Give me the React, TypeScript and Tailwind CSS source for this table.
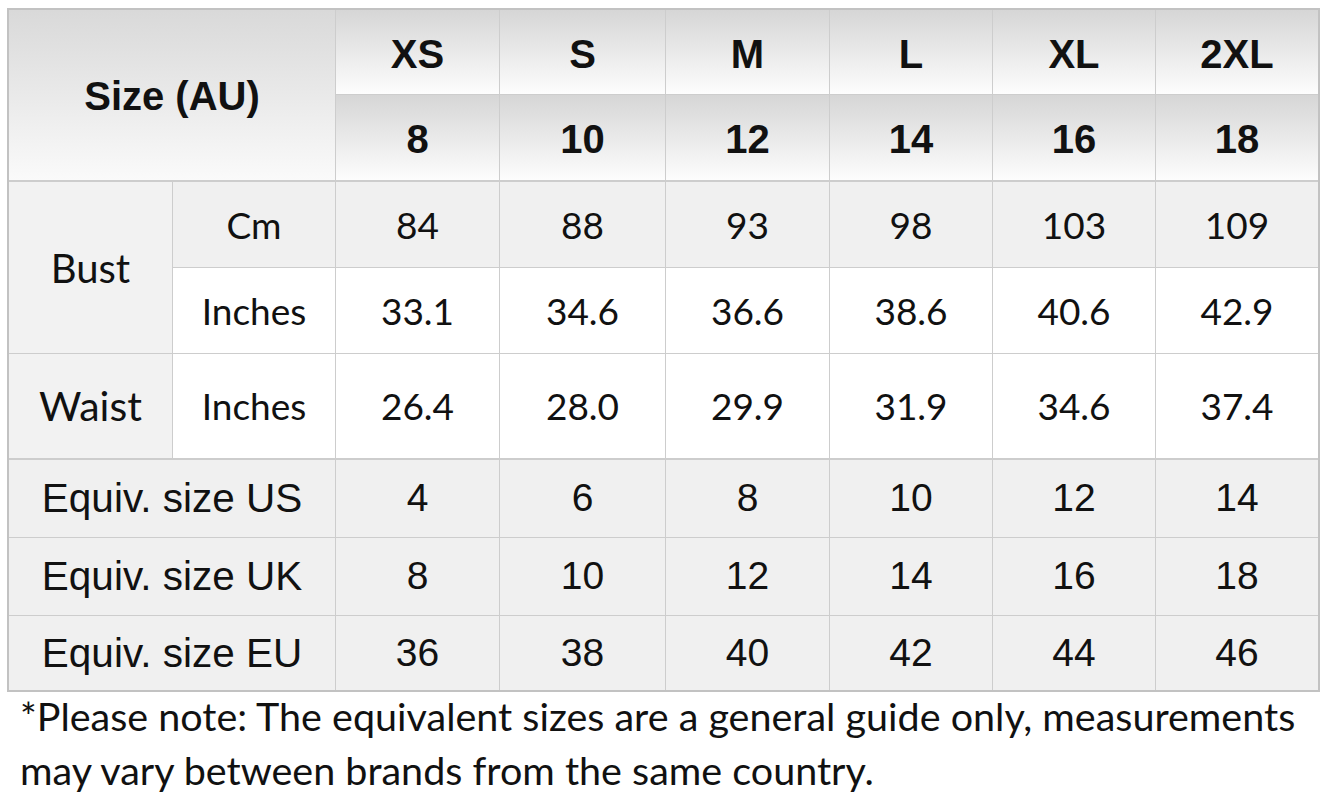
import React from "react";

const sizes = ["XS", "S", "M", "L", "XL", "2XL"];
const au = ["8", "10", "12", "14", "16", "18"];
const bustCm = ["84", "88", "93", "98", "103", "109"];
const bustIn = ["33.1", "34.6", "36.6", "38.6", "40.6", "42.9"];
const waistIn = ["26.4", "28.0", "29.9", "31.9", "34.6", "37.4"];
const us = ["4", "6", "8", "10", "12", "14"];
const uk = ["8", "10", "12", "14", "16", "18"];
const eu = ["36", "38", "40", "42", "44", "46"];

const arial = "font-['Liberation_Sans',Arial,sans-serif]";
const lato = "font-['Lato','Liberation_Sans',sans-serif]";

function Cell({
  children,
  className = "",
  last = false,
}: {
  children?: React.ReactNode;
  className?: string;
  last?: boolean;
}) {
  return (
    <div
      className={`flex items-center justify-center text-[#111] border-[#cdcdcd] ${
        last ? "" : "border-r"
      } ${className}`}
    >
      {children}
    </div>
  );
}

export default function App() {
  const hdr =
    "bg-gradient-to-b from-[#d6d6d6] to-[#fdfdfd] font-bold text-[40px] pt-[3px] " + arial;
  return (
    <div className="w-[1327px] h-[800px] bg-white overflow-hidden">
      <div className="pt-[8px] pl-[7px]">
        <div className="grid w-[1313px] grid-cols-[164px_163px_164px_166px_164px_163px_163px_162px] grid-rows-[85px_87px_86px_86px_106px_78px_78px_74px] border-2 border-[#c2c2c2]">
          {/* Header */}
          <Cell
            className={`col-span-2 row-span-2 border-b-2 bg-gradient-to-b from-[#d9d9d9] to-[#fafafa] font-bold text-[40px] ${arial}`}
          >
            <span className="pt-[2px]">Size (AU)</span>
          </Cell>
          {sizes.map((s, i) => (
            <Cell key={s} last={i === 5} className={`border-b ${hdr}`}>
              {s}
            </Cell>
          ))}
          {au.map((s, i) => (
            <Cell key={"au" + i} last={i === 5} className={`border-b-2 ${hdr}`}>
              {s}
            </Cell>
          ))}

          {/* Bust */}
          <Cell className={`row-span-2 border-b bg-[#f2f2f2] text-[40px] ${lato}`}>
            Bust
          </Cell>
          <Cell className={`border-b bg-[#f0f0f0] text-[37px] ${lato}`}>Cm</Cell>
          {bustCm.map((v, i) => (
            <Cell key={"bc" + i} last={i === 5} className={`border-b bg-[#f0f0f0] text-[37px] ${lato}`}>
              {v}
            </Cell>
          ))}
          <Cell className={`border-b bg-white text-[37px] ${lato}`}>Inches</Cell>
          {bustIn.map((v, i) => (
            <Cell key={"bi" + i} last={i === 5} className={`border-b bg-white text-[37px] ${lato}`}>
              {v}
            </Cell>
          ))}

          {/* Waist */}
          <Cell className={`border-b-2 bg-[#f2f2f2] text-[41px] ${lato}`}>Waist</Cell>
          <Cell className={`border-b-2 bg-white text-[37px] ${lato}`}>Inches</Cell>
          {waistIn.map((v, i) => (
            <Cell key={"wi" + i} last={i === 5} className={`border-b-2 bg-white text-[37px] ${lato}`}>
              {v}
            </Cell>
          ))}

          {/* Equiv rows */}
          {[
            ["Equiv. size US", us],
            ["Equiv. size UK", uk],
            ["Equiv. size EU", eu],
          ].map(([label, vals], r) => (
            <React.Fragment key={label as string}>
              <Cell
                className={`col-span-2 bg-[#f0f0f0] text-[40.5px] ${arial} ${
                  r < 2 ? "border-b" : ""
                }`}
              >
                {label as string}
              </Cell>
              {(vals as string[]).map((v, i) => (
                <Cell
                  key={i}
                  last={i === 5}
                  className={`bg-[#f0f0f0] text-[39px] ${arial} ${r < 2 ? "border-b" : ""}`}
                >
                  {v}
                </Cell>
              ))}
            </React.Fragment>
          ))}
        </div>
        <div
          className={`pl-[13px] -mt-[3px] text-[39.5px] leading-[54px] text-[#111] whitespace-nowrap ${lato}`}
        >
          <p>*Please note: The equivalent sizes are a general guide only, measurements</p>
          <p>may vary between brands from the same country.</p>
        </div>
      </div>
    </div>
  );
}
